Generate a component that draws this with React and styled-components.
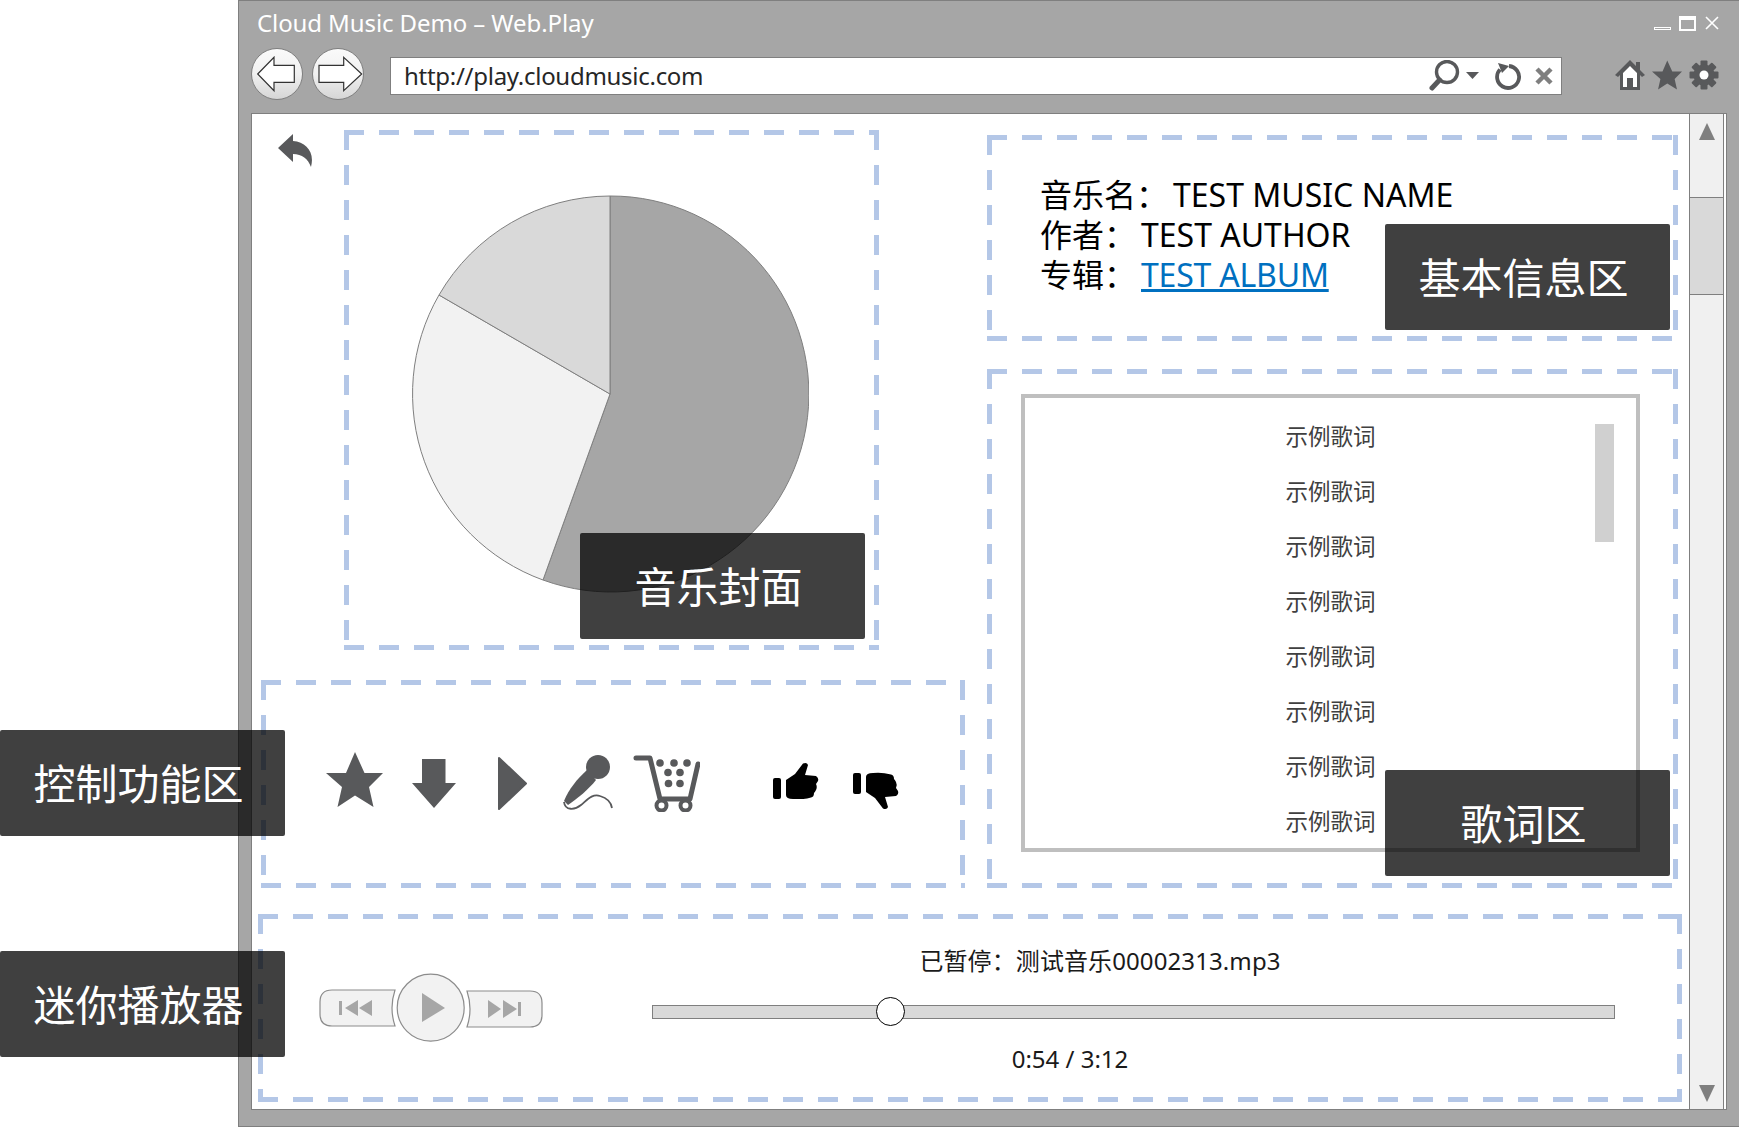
import React from "react";
import styled, { createGlobalStyle } from "styled-components";

const GlobalStyle = createGlobalStyle`
  html, body {
    margin: 0;
    background: #fff;
  }

  body {
    font-family: "Noto Sans", "Noto Sans CJK SC", sans-serif;
  }
`;

const dashColor = "#b4c7e7";
const iconColor = "#58595b";

const Page = styled.div`
  width: 1739px;
  height: 1127px;
  padding-left: 238px;
  box-sizing: border-box;
  overflow: hidden;
`;

const BrowserWindow = styled.div`
  width: 1501px;
  height: 1127px;
  box-sizing: border-box;
  background: #a6a6a6;
  border: 1px solid #7f7f7f;
  border-right: none;
  display: flex;
  flex-direction: column;
`;

const TitleBar = styled.div`
  height: 47px;
  padding: 0 20px 0 18px;
  display: flex;
  justify-content: space-between;
  color: #fff;
`;

const TitleText = styled.div`
  font-size: 24px;
  line-height: 44px;
  letter-spacing: -0.1px;
`;

const WindowButtons = styled.div`
  display: flex;
  align-items: flex-start;
  padding-top: 15px;
  gap: 8px;
`;

const NavBar = styled.div`
  height: 52px;
  margin-bottom: 13px;
  padding-left: 12px;
  display: flex;
  gap: 9px;
`;

const RoundButton = styled.div`
  width: 52px;
  height: 52px;
  box-sizing: border-box;
  border: 1px solid #808080;
  border-radius: 50%;
  background: linear-gradient(#fafafa 0%, #f0f0f0 50%, #d6d6d6 100%);
`;

const UrlBox = styled.div`
  width: 1172px;
  height: 38px;
  margin: 9px 0 0 17px;
  padding: 0 8px 0 13px;
  box-sizing: border-box;
  background: #fff;
  border: 1px solid #7f7f7f;
  display: flex;
  align-items: center;
  gap: 13px;
`;

const UrlText = styled.div`
  margin-right: auto;
  padding-bottom: 2px;
  font-size: 24px;
  color: #262626;
  letter-spacing: -0.28px;
`;

const BrowserTools = styled.div`
  margin: 12px 0 0 44px;
  display: flex;
  gap: 7px;
  height: 30px;
`;

const Content = styled.div`
  width: 1476px;
  height: 997px;
  margin-left: 12px;
  box-sizing: border-box;
  background: #fff;
  border: 1px solid #7f7f7f;
  display: flex;
`;

const Main = styled.div`
  flex: 1;
  display: flex;
  flex-direction: column;
`;

const Scrollbar = styled.div`
  width: 35px;
  margin-right: 2px;
  box-sizing: border-box;
  background: #f0f0f0;
  border-left: 1px solid #7f7f7f;
  border-right: 1px solid #7f7f7f;
  padding-top: 9px;
  display: flex;
  flex-direction: column;
  align-items: center;
`;

const ScrollArrow = styled.div`
  width: 0;
  height: 0;
  border-left: 8px solid transparent;
  border-right: 8px solid transparent;
  border-${(p) => (p.$down ? "top" : "bottom")}: 17px solid #7f7f7f;
  margin-top: ${(p) => p.$top || 0}px;
`;

const ScrollThumb = styled.div`
  width: 100%;
  height: 98px;
  margin-top: 57px;
  box-sizing: border-box;
  background: #d9d9d9;
  border-top: 1px solid #7f7f7f;
  border-bottom: 1px solid #7f7f7f;
`;

const Upper = styled.div`
  display: flex;
  padding-left: 9px;
  gap: 22px;
`;

const LeftColumn = styled.div`
  width: 704px;
`;

const RightColumn = styled.div`
  width: 691px;
  padding-top: 21px;
`;

const CoverRow = styled.div`
  display: flex;
  padding-top: 16px;
`;

const BackIcon = styled.svg`
  margin: 4px 32px 0 17px;
  flex-shrink: 0;
`;

// dashed frames: css dashed borders can't do a 20/15 pattern
const Region = styled.div`
  position: relative;
  box-sizing: border-box;
  background:
    repeating-linear-gradient(90deg, ${dashColor} 0 20px, transparent 20px 35px) top / 100% 5px no-repeat,
    repeating-linear-gradient(90deg, ${dashColor} 0 20px, transparent 20px 35px) bottom / 100% 5px no-repeat,
    repeating-linear-gradient(180deg, ${dashColor} 0 20px, transparent 20px 35px) left / 5px 100% no-repeat,
    repeating-linear-gradient(180deg, ${dashColor} 0 20px, transparent 20px 35px) right / 5px 100% no-repeat;
`;

const CoverRegion = styled(Region)`
  width: 535px;
  height: 520px;
  padding: 65px 3px 0 0;
  display: flex;
  justify-content: center;
`;

const ControlRegion = styled(Region)`
  height: 208px;
  margin-top: 30px;
  padding: 72px 0 0 65px;
  display: flex;
  align-items: flex-start;
`;

const ControlIcon = styled.svg`
  flex-shrink: 0;
  margin-left: ${(p) => p.$gap || 0}px;
  margin-top: ${(p) => p.$top || 0}px;
`;

const InfoRegion = styled(Region)`
  height: 206px;
  padding: 40px 0 0 53px;
`;

const InfoLine = styled.div`
  font-size: 32px;
  line-height: 40px;
  color: #000;
  white-space: nowrap;
`;

const Colon = styled.span`
  margin-right: 5px;
`;

const AlbumLink = styled.a`
  color: #0070c0;
  text-decoration: underline;
  letter-spacing: -0.2px;
`;

const LyricsRegion = styled(Region)`
  height: 519px;
  margin-top: 28px;
  padding: 25px 0 0 34px;
`;

const LyricsBox = styled.div`
  position: relative;
  width: 619px;
  height: 458px;
  box-sizing: border-box;
  border: 4px solid #bfbfbf;
  padding-top: 11px;
  overflow: hidden;
`;

const LyricLine = styled.div`
  height: 55px;
  line-height: 55px;
  text-align: center;
  font-size: 22.5px;
  color: #404040;
`;

const LyricsThumb = styled.div`
  position: absolute;
  left: 570px;
  top: 26px;
  width: 19px;
  height: 118px;
  background: #d0d0d0;
`;

const MiniRegion = styled(Region)`
  width: 1424px;
  height: 188px;
  margin: 26px 0 0 6px;
  display: flex;
`;

const Transport = styled.svg`
  margin: 51px 0 0 52px;
  flex-shrink: 0;
`;

const PlayerBody = styled.div`
  margin-left: 92px;
  padding-top: 27px;
`;

const PlayerText = styled.div`
  width: ${(p) => p.$width}px;
  height: 40px;
  line-height: 40px;
  margin-top: ${(p) => p.$top || 0}px;
  text-align: center;
  font-size: 24px;
  color: #1a1a1a;
  letter-spacing: ${(p) => p.$spacing || 0}px;
`;

const SliderTrack = styled.div`
  position: relative;
  width: 963px;
  height: 14px;
  margin-top: 24px;
  box-sizing: border-box;
  background: #d9d9d9;
  border: 1px solid #7f7f7f;
`;

const SliderThumb = styled.div`
  position: absolute;
  left: 223px;
  top: -9px;
  width: 29px;
  height: 29px;
  box-sizing: border-box;
  background: #fff;
  border: 1px solid #000;
  border-radius: 50%;
`;

const Label = styled.div`
  position: absolute;
  left: ${(p) => p.$left}px;
  top: ${(p) => p.$top}px;
  width: 285px;
  height: 106px;
  padding: 0 8px 4px 0;
  box-sizing: border-box;
  background: rgba(0, 0, 0, 0.75);
  border-radius: 2px;
  color: #fff;
  font-size: 42px;
  font-weight: 400;
  display: flex;
  align-items: center;
  justify-content: center;
  z-index: 2;
`;

const STAR = "29,0 38.5,21 57,21 43,35 47.5,55 29,43.5 11.5,55 16,35 0,21 20,21";
const THUMB =
  "M13 18 L22 12 L30 1.5 Q34 0 35 3 L32 13 L43 14 Q46 16 45 19 L43 22 Q44.5 25 43 28 Q42 30 41 31 Q41 35 38 35.5 Q29 38 20 37 Q13 37 13 33 Z";

const NavArrow = ({ points }) => (
  <svg width="50" height="50" viewBox="0 0 50 50">
    <polygon points={points} fill="#fff" stroke="#333" strokeWidth="1.2" />
  </svg>
);

const GearIcon = () => (
  <svg width="30" height="30" viewBox="0 0 30 30">
    {[0, 45, 90, 135].map((a) => (
      <rect key={a} x="11.5" y="0.5" width="7" height="29" rx="1" fill={iconColor} transform={`rotate(${a} 15 15)`} />
    ))}
    <circle cx="15" cy="15" r="10.5" fill={iconColor} />
    <circle cx="15" cy="15" r="4.5" fill="#fff" />
  </svg>
);

const lyrics = Array.from({ length: 8 }, () => "示例歌词");

const App = () => {
  return (
    <Page>
      <GlobalStyle />
      <BrowserWindow>
        <TitleBar>
          <TitleText>Cloud Music Demo – Web.Play</TitleText>
          <WindowButtons>
            <svg width="17" height="15" viewBox="0 0 17 15">
              <rect x="0.5" y="11.5" width="16" height="2" fill="none" stroke="#fff" />
            </svg>
            <svg width="17" height="15" viewBox="0 0 17 15">
              <rect x="1" y="1" width="15" height="13" fill="none" stroke="#fff" strokeWidth="2" />
              <rect x="1" y="1" width="15" height="3" fill="#fff" />
            </svg>
            <svg width="15" height="15" viewBox="0 0 15 15">
              <path d="M2 1 L14 13 M14 1 L2 13" stroke="#fff" strokeWidth="1.6" />
            </svg>
          </WindowButtons>
        </TitleBar>

        <NavBar>
          <RoundButton>
            <NavArrow points="5.7,25 22,8.3 22,16.3 42.3,16.3 42.3,33.3 22,33.3 22,41.7" />
          </RoundButton>
          <RoundButton>
            <NavArrow points="6,16.3 30.7,16.3 30.7,8.3 48.7,25 30.7,41.7 30.7,33.3 6,33.3" />
          </RoundButton>
          <UrlBox>
            <UrlText>http://play.cloudmusic.com</UrlText>
            <svg width="52" height="32" viewBox="0 0 52 32">
              <circle cx="18" cy="12" r="10.5" fill="none" stroke={iconColor} strokeWidth="3.4" />
              <path d="M10.5 20 L3 28" stroke={iconColor} strokeWidth="5" strokeLinecap="round" />
              <polygon points="37,12 50,12 43.5,19" fill={iconColor} />
            </svg>
            <svg width="28" height="30" viewBox="0 0 28 30">
              <path d="M15 5 A11 11 0 1 1 6 8.5" fill="none" stroke={iconColor} strokeWidth="3.8" />
              <polygon points="4,2 15,5 8,12" fill={iconColor} />
            </svg>
            <svg width="18" height="18" viewBox="0 0 18 18">
              <path d="M2 2 L16 16 M16 2 L2 16" stroke="#7f7f7f" strokeWidth="4.5" />
            </svg>
          </UrlBox>
          <BrowserTools>
            <svg width="30" height="30" viewBox="0 0 30 30">
              <path d="M15 0 L21 6 V2 H25 V10 L30 15 L27 17 L25 15 V30 H5 V15 L3 17 L0 15 Z" fill={iconColor} />
              <path d="M15 6 L8 13 V27 H12 V18 H18 V27 H22 V13 Z" fill="#fff" />
            </svg>
            <svg width="30" height="30" viewBox="0 0 57 55">
              <polygon points={STAR} fill={iconColor} />
            </svg>
            <GearIcon />
          </BrowserTools>
        </NavBar>

        <Content>
          <Main>
            <Upper>
              <LeftColumn>
                <CoverRow>
                  <BackIcon width="34" height="34" viewBox="0 0 34 34">
                    <path d="M0 14 L15 0 V7 C28 8 37 18 33 33 C30 25 24 20 15 20 V28 Z" fill={iconColor} />
                  </BackIcon>
                  <CoverRegion>
                    <svg width="398" height="398" viewBox="0 0 398 398">
                      <path d="M199 199 L199 1 A198 198 0 1 1 132 385 Z" fill="#a6a6a6" stroke="#7f7f7f" />
                      <path d="M199 199 L132 385 A198 198 0 0 1 28 100 Z" fill="#f2f2f2" stroke="#7f7f7f" />
                      <path d="M199 199 L28 100 A198 198 0 0 1 199 1 Z" fill="#d9d9d9" stroke="#7f7f7f" />
                    </svg>
                    <Label $left={236} $top={403}>音乐封面</Label>
                  </CoverRegion>
                </CoverRow>

                <ControlRegion>
                  <ControlIcon width="57" height="55" viewBox="0 0 57 55">
                    <polygon points={STAR} fill={iconColor} />
                  </ControlIcon>
                  <ControlIcon $gap={29} $top={7} width="44" height="49" viewBox="0 0 44 49">
                    <polygon points="10,0 33.5,0 33.5,24 44,24 22,49 0,24 10,24" fill={iconColor} />
                  </ControlIcon>
                  <ControlIcon $gap={42} $top={5} width="29" height="53" viewBox="0 0 29 53">
                    <polygon points="1,1 28,26.5 1,52" fill={iconColor} stroke={iconColor} strokeWidth="2" strokeLinejoin="round" />
                  </ControlIcon>
                  <ControlIcon $gap={36} $top={3} width="50" height="56" viewBox="0 0 50 56">
                    <circle cx="35" cy="12" r="12" fill={iconColor} />
                    <path d="M24 15 C14 24 6 34 1 46 L5 50 C14 44 26 34 33 25 Z" fill={iconColor} />
                    <path d="M1 47 C2 56 12 55 18 50 C24 45 30 38 37 41 C44 43 48 47 49 53" fill="none" stroke={iconColor} strokeWidth="1.8" />
                  </ControlIcon>
                  <ControlIcon $gap={20} $top={3} width="67" height="57" viewBox="0 0 67 57">
                    <path d="M3 3 H17 L27 44 H57 L65 9" fill="none" stroke={iconColor} strokeWidth="5" strokeLinecap="round" strokeLinejoin="round" />
                    <circle cx="28.5" cy="50.5" r="5" fill="#fff" stroke={iconColor} strokeWidth="4" />
                    <circle cx="52.5" cy="50.5" r="5" fill="#fff" stroke={iconColor} strokeWidth="4" />
                    {[[27, 8], [41, 8], [54, 8], [35, 17.5], [47, 17.5], [35.5, 28.5], [47, 28.5]].map(([cx, cy]) => (
                      <circle key={`${cx}-${cy}`} cx={cx} cy={cy} r="3.8" fill={iconColor} />
                    ))}
                  </ControlIcon>
                  <ControlIcon $gap={73} $top={10} width="46" height="37" viewBox="0 0 46 37">
                    <rect x="0" y="16" width="8" height="21" rx="2" fill="#000" />
                    <path d={THUMB} fill="#000" />
                  </ControlIcon>
                  <ControlIcon $gap={34} $top={20} width="46" height="38" viewBox="0 0 46 38">
                    <g transform="translate(0 38) scale(1 -1)">
                      <rect x="0" y="16" width="8" height="21" rx="2" fill="#000" />
                      <path d={THUMB} fill="#000" />
                    </g>
                  </ControlIcon>
                  <Label $left={-261} $top={50}>控制功能区</Label>
                </ControlRegion>
              </LeftColumn>

              <RightColumn>
                <InfoRegion>
                  <InfoLine><Colon>音乐名：</Colon>TEST MUSIC NAME</InfoLine>
                  <InfoLine><Colon>作者：</Colon>TEST AUTHOR</InfoLine>
                  <InfoLine>
                    <Colon>专辑：</Colon><AlbumLink href="#">TEST ALBUM</AlbumLink>
                  </InfoLine>
                  <Label $left={398} $top={89}>基本信息区</Label>
                </InfoRegion>

                <LyricsRegion>
                  <LyricsBox>
                    {lyrics.map((line, i) => (
                      <LyricLine key={i}>{line}</LyricLine>
                    ))}
                    <LyricsThumb />
                  </LyricsBox>
                  <Label $left={398} $top={401}>歌词区</Label>
                </LyricsRegion>
              </RightColumn>
            </Upper>

            <MiniRegion>
              <Transport width="250" height="90" viewBox="0 0 250 90">
                <path d="M85 25 H22 Q10 25 10 37 V49 Q10 61 22 61 H85 Q79 43 85 25 Z" fill="#f2f2f2" stroke="#8c8c8c" strokeWidth="1.2" />
                <path d="M157 26 H220 Q232 26 232 38 V50 Q232 62 220 62 H157 Q163 44 157 26 Z" fill="#f2f2f2" stroke="#8c8c8c" strokeWidth="1.2" />
                <circle cx="120.7" cy="42.7" r="33.5" fill="#f2f2f2" stroke="#8c8c8c" strokeWidth="1.2" />
                <polygon points="112,28 135,43 112,57" fill="#a6a6a6" />
                <rect x="29" y="36" width="3" height="14" fill="#a6a6a6" />
                <polygon points="35,43 48,35 48,51" fill="#a6a6a6" />
                <polygon points="49,43 62,35 62,51" fill="#a6a6a6" />
                <polygon points="178,35 191,44 178,53" fill="#a6a6a6" />
                <polygon points="193,35 207,44 193,53" fill="#a6a6a6" />
                <rect x="208" y="37" width="3" height="14" fill="#a6a6a6" />
              </Transport>
              <PlayerBody>
                <PlayerText $width={896} $spacing={0.1}>已暂停：测试音乐00002313.mp3</PlayerText>
                <SliderTrack>
                  <SliderThumb />
                </SliderTrack>
                <PlayerText $width={836} $top={20}>0:54 / 3:12</PlayerText>
              </PlayerBody>
              <Label $left={-258} $top={37}>迷你播放器</Label>
            </MiniRegion>
          </Main>

          <Scrollbar>
            <ScrollArrow />
            <ScrollThumb />
            <ScrollArrow $down $top={790} />
          </Scrollbar>
        </Content>
      </BrowserWindow>
    </Page>
  );
};

export default App;
